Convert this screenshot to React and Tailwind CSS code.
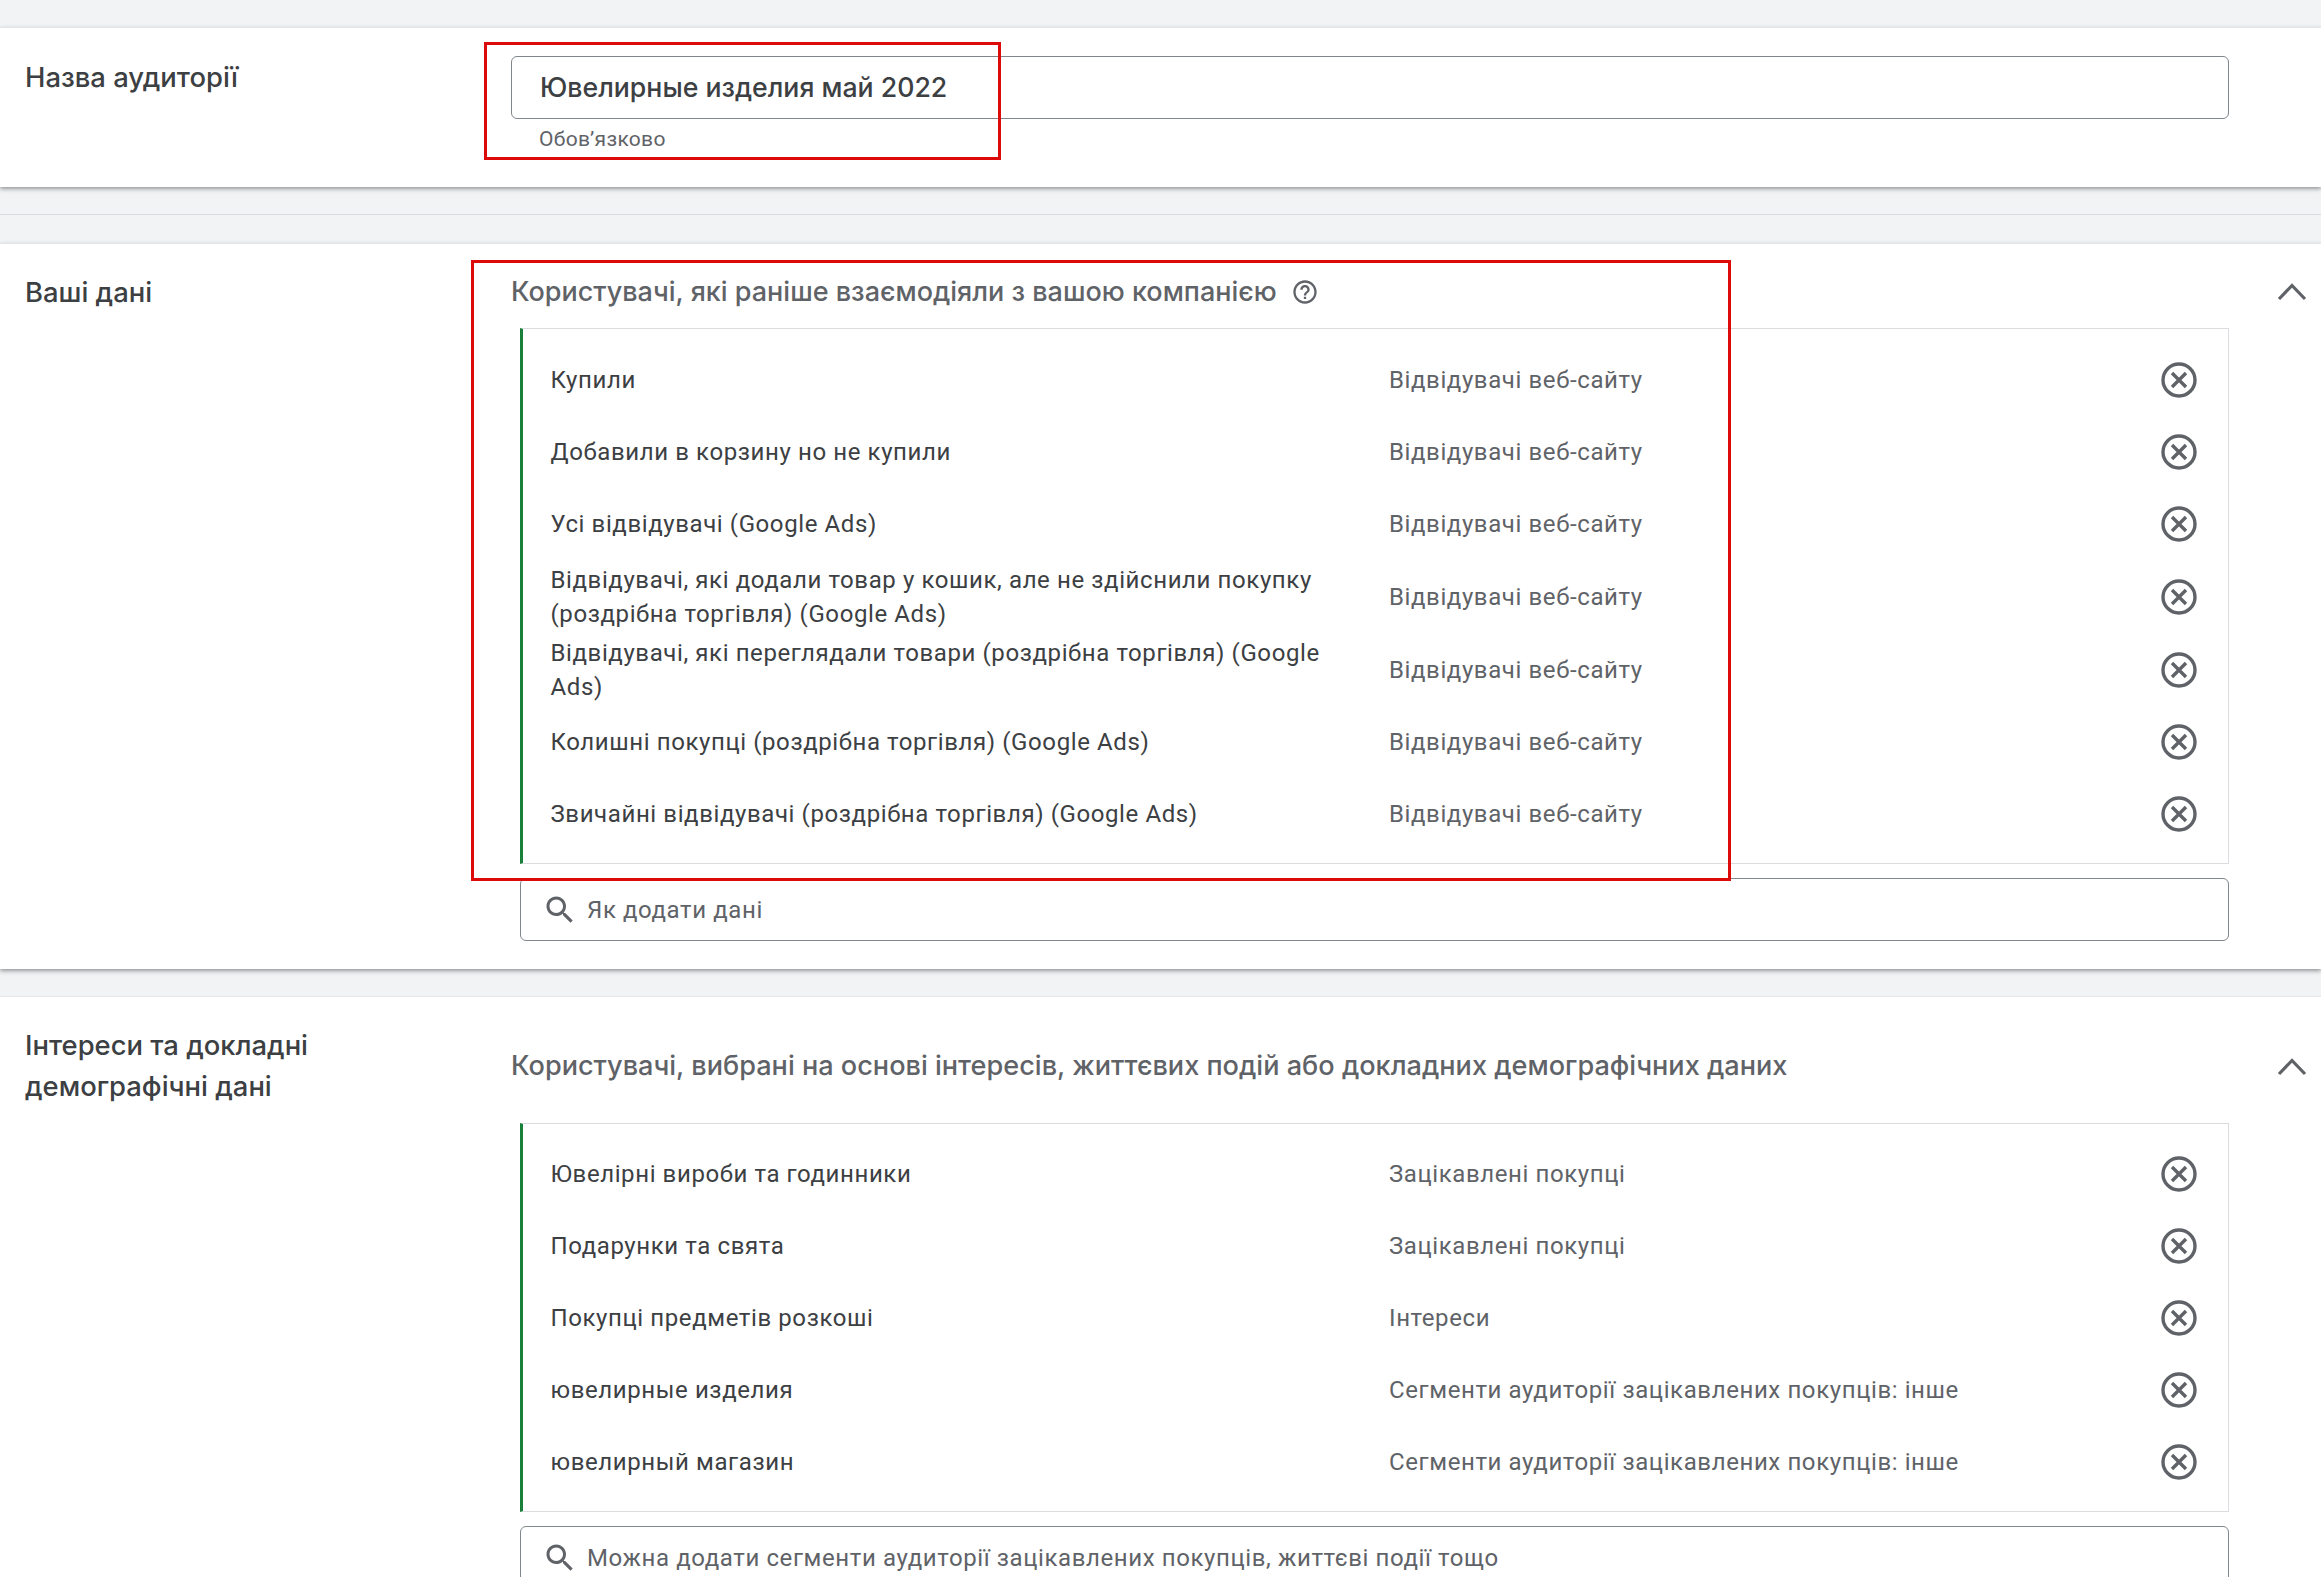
const SEARCH_PATH = 'M15.5 14h-.79l-.28-.27C15.41 12.59 16 11.11 16 9.5 16 5.91 13.09 3 9.5 3S3 5.91 3 9.5 5.91 16 9.5 16c1.61 0 3.09-.59 4.23-1.57l.27.28v.79l5 4.99L20.49 19l-4.99-5zm-6 0C7.01 14 5 11.99 5 9.5S7.01 5 9.5 5 14 7.01 14 9.5 11.99 14 9.5 14z';
const HELP_PATH = 'M11 18h2v-2h-2v2zm1-16C6.48 2 2 6.48 2 12s4.48 10 10 10 10-4.48 10-10S17.52 2 12 2zm0 18c-4.41 0-8-3.59-8-8s3.59-8 8-8 8 3.59 8 8-3.59 8-8 8zm0-14c-2.21 0-4 1.79-4 4h2c0-1.1.9-2 2-2s2 .9 2 2c0 2-3 1.75-3 5h2c0-2.25 3-2.5 3-5 0-2.21-1.79-4-4-4z';

const yourData = [
  ['Купили', 'Відвідувачі веб-сайту'],
  ['Добавили в корзину но не купили', 'Відвідувачі веб-сайту'],
  ['Усі відвідувачі (Google Ads)', 'Відвідувачі веб-сайту'],
  ['Відвідувачі, які додали товар у кошик, але не здійснили покупку (роздрібна торгівля) (Google Ads)', 'Відвідувачі веб-сайту'],
  ['Відвідувачі, які переглядали товари (роздрібна торгівля) (Google Ads)', 'Відвідувачі веб-сайту'],
  ['Колишні покупці (роздрібна торгівля) (Google Ads)', 'Відвідувачі веб-сайту'],
  ['Звичайні відвідувачі (роздрібна торгівля) (Google Ads)', 'Відвідувачі веб-сайту'],
];

const interests = [
  ['Ювелірні вироби та годинники', 'Зацікавлені покупці'],
  ['Подарунки та свята', 'Зацікавлені покупці'],
  ['Покупці предметів розкоші', 'Інтереси'],
  ['ювелирные изделия', 'Сегменти аудиторії зацікавлених покупців: інше'],
  ['ювелирный магазин', 'Сегменти аудиторії зацікавлених покупців: інше'],
];

function Icon({ d, className }) {
  return (
    <svg viewBox="0 0 24 24" className={className} fill="currentColor">
      <path d={d} />
    </svg>
  );
}

function CloseIcon() {
  return (
    <svg viewBox="0 0 42 42" className="mr-[28px] size-[42px] shrink-0 text-[#5f6368]" fill="none" stroke="currentColor" strokeWidth="3.4">
      <circle cx="21" cy="21" r="16" />
      <path d="M14 14l14 14M28 14L14 28" />
    </svg>
  );
}

function Chevron() {
  return (
    <svg viewBox="0 0 56 56" className="size-[56px] text-[#5f6368]" fill="none" stroke="currentColor" strokeWidth="3.2">
      <path d="M15 35L28 21.5L41 35" />
    </svg>
  );
}

function SegmentList({ items, top, bottom }) {
  return (
    <div className={`ml-[9px] border border-[#dadce0] border-l-[3px] border-l-[#188038] ${top} ${bottom}`}>
      {items.map(([name, type]) => (
        <div key={name} className="flex min-h-[72px] items-center py-[2.5px]">
          <div className="ml-[27.5px] w-[838.5px] shrink-0 pr-[40px] text-[24px] leading-[34px] tracking-[0.6px] text-[#3c4043]">{name}</div>
          <div className="flex-1 text-[24px] tracking-[0.6px] text-[#5f6368]">{type}</div>
          <CloseIcon />
        </div>
      ))}
    </div>
  );
}

function SearchBox({ text }) {
  return (
    <div className="ml-[9px] flex h-[63px] items-center rounded-[6px] border border-[#80868b] pl-[21px] text-[24px] tracking-[0.6px] text-[#5f6368]">
      <Icon d={SEARCH_PATH} className="mr-[9px] size-[36px] shrink-0" />
      <span>{text}</span>
    </div>
  );
}

function Label({ children, className }) {
  return <div className={`w-[511px] shrink-0 pl-[25px] pr-[170px] font-['Inter'] text-[27.4px] font-medium text-[#3c4043] ${className}`}>{children}</div>;
}

export default function App() {
  return (
    <div className="relative h-[1577px] overflow-hidden bg-[#f1f3f4] font-['Roboto']">
      <div className="h-[27px]" />
      <div className="flex h-[160px] border-t border-[#e4e6e8] bg-white shadow-[0_2px_4px_rgba(60,64,67,0.5)]">
        <Label className="pt-[28px] leading-[42px]">Назва аудиторії</Label>
        <div className="w-[1718px] pt-[28px]">
          <div className="flex h-[63px] items-center rounded-[6px] border border-[#80868b] pl-[28px] font-['Inter'] text-[26.7px] font-medium text-[#3c4043]">Ювелирные изделия май 2022</div>
          <div className="mt-[6px] pl-[28px] text-[21px] leading-[28px] tracking-[0.3px] text-[#5f6368]">Обов’язково</div>
        </div>
      </div>

      <div className="h-[28px] border-b border-[#dadce0]" />
      <div className="h-[28px]" />

      <div className="flex h-[726px] border-t border-[#e4e6e8] bg-white shadow-[0_2px_4px_rgba(60,64,67,0.5)]">
        <Label className="pt-[27px] leading-[42px]">Ваші дані</Label>
        <div className="w-[1718px]">
          <div className="flex h-[84px] items-start pt-[27px] font-['Inter'] text-[27px] font-medium leading-[42px] text-[#5f6368]">
            Користувачі, які раніше взаємодіяли з вашою компанією
            <Icon d={HELP_PATH} className="ml-[14px] mt-[7px] size-[28px]" />
          </div>
          <SegmentList items={yourData} top="pt-[15px]" bottom="pb-[13px]" />
          <div className="h-[14px]" />
          <SearchBox text="Як додати дані" />
        </div>
        <div className="flex flex-1 justify-center pl-[34px] pt-[20px]">
          <Chevron />
        </div>
      </div>

      <div className="h-[27px]" />

      <div className="flex h-[600px] border-t border-[#e4e6e8] bg-white">
        <Label className="pt-[28px] leading-[41px]">Інтереси та докладні демографічні дані</Label>
        <div className="w-[1718px]">
          <div className="flex h-[126px] items-start pt-[48px] font-['Inter'] text-[27.1px] font-medium leading-[42px] text-[#5f6368]">
            Користувачі, вибрані на основі інтересів, життєвих подій або докладних демографічних даних
          </div>
          <SegmentList items={interests} top="pt-[14px]" bottom="pb-[13px]" />
          <div className="h-[14px]" />
          <SearchBox text="Можна додати сегменти аудиторії зацікавлених покупців, життєві події тощо" />
        </div>
        <div className="flex flex-1 justify-center pl-[34px] pt-[42px]">
          <Chevron />
        </div>
      </div>

      {/* red annotation boxes drawn over the page */}
      <div className="pointer-events-none absolute left-[484px] top-[42px] h-[118px] w-[517px] border-[3px] border-[#dd0a0a]" />
      <div className="pointer-events-none absolute left-[471px] top-[260px] h-[621px] w-[1260px] border-[3px] border-[#dd0a0a]" />
    </div>
  );
}
